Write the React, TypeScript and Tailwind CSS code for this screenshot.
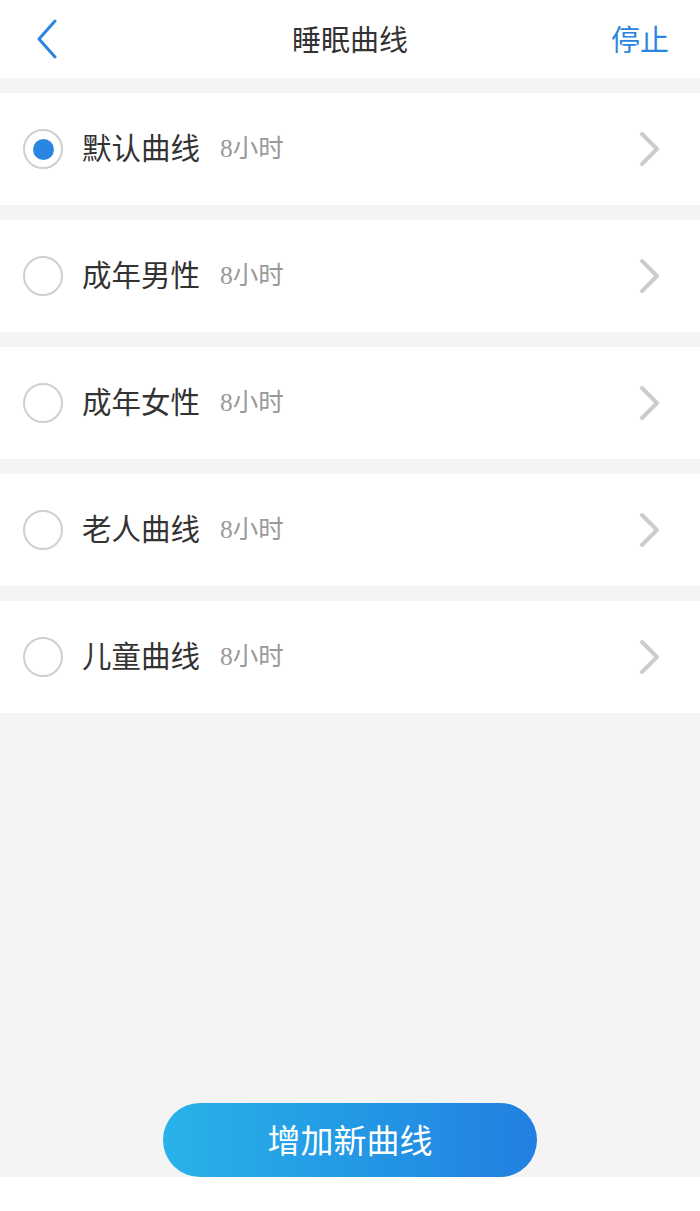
import React from "react";

const items = ["默认曲线", "成年男性", "成年女性", "老人曲线", "儿童曲线"];

export default function App() {
  return (
    <div
      className="w-[700px] h-[1211px] flex flex-col bg-[#f4f4f4]"
      style={{ fontFamily: '"Noto Sans CJK SC", "Noto Sans", sans-serif' }}
    >
      <div className="h-[78px] bg-white flex items-center justify-between px-[36px] relative shrink-0">
        <svg width="24" height="40" viewBox="0 0 24 40" className="ml-[-1px]">
          <path d="M20 2 L4 20 L20 38" fill="none" stroke="#2a86e0" strokeWidth="3" strokeLinecap="round" strokeLinejoin="round" />
        </svg>
        <div className="absolute left-0 right-0 text-center text-[29px] text-[#333] pointer-events-none">睡眠曲线</div>
        <div className="text-[29px] text-[#2a86e0] mr-[-5px]">停止</div>
      </div>
      <div className="flex flex-col gap-[15px] pt-[15px]">
        {items.map((t, i) => (
          <div key={t} className="h-[112px] bg-white flex items-center pl-[23px] pr-[38px]">
            <div className="w-[40px] h-[40px] rounded-full border-2 border-[#cfcfcf] flex items-center justify-center shrink-0">
              {i === 0 && <div className="w-[21px] h-[21px] rounded-full bg-[#2a86e0]" />}
            </div>
            <div className="ml-[19px] text-[29.5px] text-[#333] leading-none mt-[-4px]">{t}</div>
            <div className="ml-[20px] text-[25.5px] text-[#9a9a9a] leading-none mt-[-4px]">
              <span style={{ fontFamily: '"Liberation Serif", serif' }}>8</span>小时
            </div>
            <div className="flex-1" />
            <svg width="24" height="36" viewBox="0 0 24 36">
              <path d="M4 3 L19 18 L4 33" fill="none" stroke="#cccccc" strokeWidth="4" strokeLinecap="round" strokeLinejoin="round" />
            </svg>
          </div>
        ))}
      </div>
      <div className="flex-1 flex items-end justify-center">
        <div className="w-[374px] h-[74px] rounded-full bg-gradient-to-r from-[#29b2e9] to-[#227fe0] flex items-center justify-center text-white text-[33px]">
          增加新曲线
        </div>
      </div>
      <div className="h-[34px] bg-white shrink-0" />
    </div>
  );
}
